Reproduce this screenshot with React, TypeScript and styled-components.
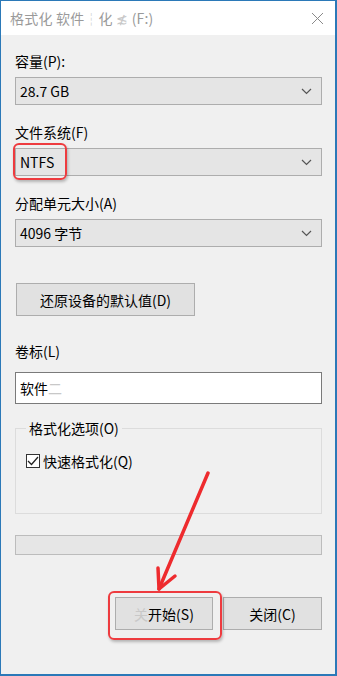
import React from "react";
import styled, { createGlobalStyle } from "styled-components";

const GlobalStyle = createGlobalStyle`
  html, body {
    margin: 0;
    padding: 0;
    background: #f0f0f0;
  }
  * {
    box-sizing: border-box;
  }
`;

const Window = styled.div`
  position: relative;
  width: 337px;
  height: 676px;
  border: 1px solid #2b79b8;
  border-right-width: 2px;
  border-bottom-width: 2px;
  background: #f0f0f0;
  font-family: "Noto Sans CJK SC", "Noto Sans", sans-serif;
  font-size: 14px;
  color: #000;
  overflow: hidden;
`;

const TitleBar = styled.div`
  height: 34px;
  background: #fff;
  display: flex;
  align-items: center;
  justify-content: space-between;
  padding: 0 11px 0 9px;
`;

const Title = styled.div`
  color: #9a9a9a;
  font-size: 14px;
  letter-spacing: 0.2px;
`;

const Faint = styled.span`
  color: #c8c8c8;
`;

const Body = styled.div`
  padding: 0 13px 0 14px;
  display: flex;
  flex-direction: column;
`;

const Label = styled.div<{ $top: number; $gap: number }>`
  margin-top: ${(p) => p.$top}px;
  margin-bottom: ${(p) => p.$gap}px;
  line-height: 18px;
  height: 18px;
`;

const Select = styled.div`
  height: 28px;
  background: #e5e5e5;
  border: 1px solid #adadad;
  display: flex;
  align-items: center;
  justify-content: space-between;
  padding: 0 9px 0 4px;
`;

const Button = styled.div<{ $w: number }>`
  width: ${(p) => p.$w}px;
  height: 33px;
  background: #e1e1e1;
  border: 1px solid #adadad;
  display: flex;
  align-items: center;
  justify-content: center;
`;

const ResetRow = styled.div`
  margin-top: 36px;
  padding-left: 1px;
`;

const Input = styled.div`
  height: 32px;
  background: #fff;
  border: 1px solid #7a7a7a;
  display: flex;
  align-items: center;
  padding: 0 4px;
`;

const Group = styled.fieldset`
  margin: 15px 0 0;
  padding: 6px 10px 0;
  height: 95px;
  border: 1px solid #dcdcdc;
  border-radius: 0;
`;

const Legend = styled.legend`
  padding: 0 3px;
  margin-left: 0;
  line-height: 18px;
`;

const CheckRow = styled.label`
  display: flex;
  align-items: center;
  gap: 3px;
  margin-top: 8px;
`;

const Box = styled.span`
  width: 14px;
  height: 14px;
  border: 1px solid #333;
  background: #fff;
  display: flex;
  align-items: center;
  justify-content: center;
`;

const Progress = styled.div`
  margin-top: 21px;
  height: 20px;
  background: #e6e6e6;
  border: 1px solid #bcbcbc;
`;

const Actions = styled.div`
  margin-top: 42px;
  display: flex;
  justify-content: flex-end;
  gap: 10px;
`;

const Highlight = styled.div<{ $x: number; $y: number; $w: number; $h: number }>`
  position: absolute;
  left: ${(p) => p.$x}px;
  top: ${(p) => p.$y}px;
  width: ${(p) => p.$w}px;
  height: ${(p) => p.$h}px;
  border: 2.5px solid #ee3b3f;
  border-radius: 6px;
  box-shadow: 1px 2px 3px rgba(0, 0, 0, 0.25);
  pointer-events: none;
`;

const Overlay = styled.svg`
  position: absolute;
  left: 0;
  top: 0;
  pointer-events: none;
`;

const Chevron = () => (
  <svg width="11" height="7" viewBox="0 0 11 7">
    <path d="M1 1l4.5 4.5L10 1" fill="none" stroke="#555" strokeWidth="1.2" />
  </svg>
);

export default function App() {
  return (
    <>
      <GlobalStyle />
      <Window>
        <TitleBar>
          <Title>
            格式化 软件<Faint>┆</Faint>化 <Faint>≴</Faint> (F:)
          </Title>
          <svg width="13" height="13" viewBox="0 0 13 13">
            <path d="M1 1l11 11M12 1L1 12" stroke="#8a8a8a" strokeWidth="1" />
          </svg>
        </TitleBar>
        <Body>
          <Label $top={17} $gap={7}>容量(P):</Label>
          <Select>
            <span>28.7 GB</span>
            <Chevron />
          </Select>

          <Label $top={18} $gap={7}>文件系统(F)</Label>
          <Select>
            <span>NTFS</span>
            <Chevron />
          </Select>

          <Label $top={18} $gap={7}>分配单元大小(A)</Label>
          <Select>
            <span>4096 字节</span>
            <Chevron />
          </Select>

          <ResetRow>
            <Button $w={179}>还原设备的默认值(D)</Button>
          </ResetRow>

          <Label $top={26} $gap={12}>卷标(L)</Label>
          <Input>
            软件<Faint>二</Faint>
          </Input>

          <Group>
            <Legend>格式化选项(O)</Legend>
            <CheckRow>
              <Box>
                <svg width="12" height="10" viewBox="0 0 12 10">
                  <path d="M1 5l3.5 3.5L11 1" fill="none" stroke="#222" strokeWidth="1.3" />
                </svg>
              </Box>
              快速格式化(Q)
            </CheckRow>
          </Group>

          <Progress />

          <Actions>
            <Button $w={98}>
              <span>
                <Faint>关</Faint>开始(S)
              </span>
            </Button>
            <Button $w={99}>关闭(C)</Button>
          </Actions>
        </Body>

        <Highlight $x={12} $y={142} $w={54} $h={37} />
        <Highlight $x={107} $y={590} $w={114} $h={49} />

        <Overlay width="337" height="676" viewBox="0 0 337 676">
          <g stroke="#ee2b2e" strokeWidth="3.5" strokeLinecap="round" fill="none">
            <path d="M207 472L158 588" />
            <path d="M158 588L157 567M158 588L174 575" />
          </g>
        </Overlay>
      </Window>
    </>
  );
}
